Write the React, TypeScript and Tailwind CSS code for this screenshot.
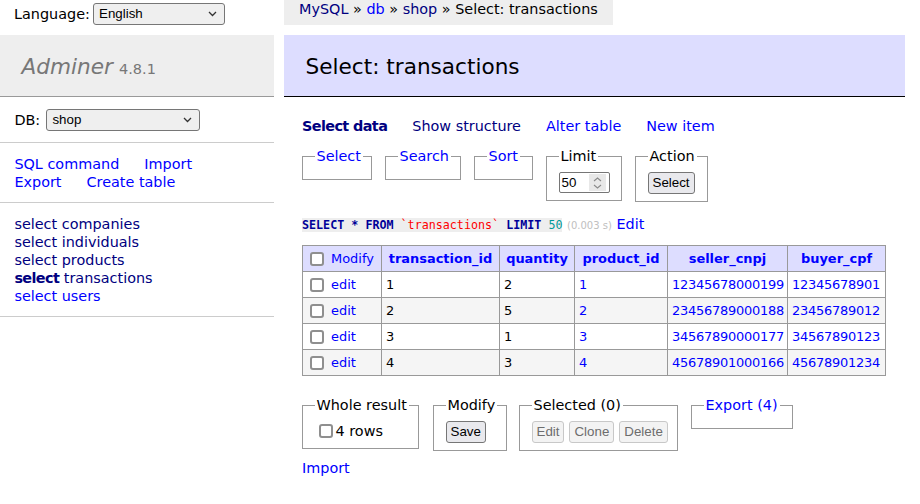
import React from 'react';

const sans = "font-['DejaVu_Sans',Verdana,sans-serif]";
const ctl = "font-['Liberation_Sans',Arial,sans-serif] text-[13.33px]";

function Chevron() {
  return (
    <svg width="9" height="6" viewBox="0 0 9 6" className="shrink-0">
      <path d="M1 1l3.5 3.5L8 1" fill="none" stroke="#333" strokeWidth="1.3" />
    </svg>
  );
}

function FakeSelect({ value, width }: { value: string; width: string }) {
  return (
    <div
      className={`flex h-[22px] ${width} items-center justify-between rounded-[3px] border border-[#767676] bg-[#efefef] pl-[5px] pr-[7px] text-black ${ctl}`}
    >
      <span>{value}</span>
      <Chevron />
    </div>
  );
}

function Checkbox({ className = '' }: { className?: string }) {
  return (
    <span
      className={`inline-block size-[14px] shrink-0 rounded-[3px] border-2 border-[#8f8f8f] bg-white align-middle ${className}`}
    />
  );
}

function Button({ label, disabled = false }: { label: string; disabled?: boolean }) {
  return (
    <span
      className={`inline-flex h-[22px] items-center rounded-[3px] border px-[4px] ${ctl} ${
        disabled
          ? 'border-[#c8c8c8] bg-[#f3f3f3] text-[#6d6d6d]'
          : 'border-[#767676] bg-[#e9e9ed] text-black'
      }`}
    >
      {label}
    </span>
  );
}

function Fieldset({
  legend,
  link = false,
  width,
  children,
}: {
  legend: string;
  link?: boolean;
  width: string;
  children?: React.ReactNode;
}) {
  return (
    <fieldset
      className={`${width} min-w-0 shrink-0 border border-[#999] pb-[7px] pl-[11.5px] pr-[10px] pt-[7px]`}
    >
      <legend className={`px-[2px] whitespace-nowrap ${link ? 'text-[blue]' : 'text-black'}`}>{legend}</legend>
      {children}
    </fieldset>
  );
}

const rows = [
  { id: '1', qty: '2', product: '1', seller: '12345678000199', buyer: '12345678901' },
  { id: '2', qty: '5', product: '2', seller: '23456789000188', buyer: '23456789012' },
  { id: '3', qty: '1', product: '3', seller: '34567890000177', buyer: '34567890123' },
  { id: '4', qty: '3', product: '4', seller: '45678901000166', buyer: '45678901234' },
];

const tables = ['companies', 'individuals', 'products', 'transactions', 'users'];

export default function App() {
  return (
    <div className={`w-[920px] bg-white text-[14.4px] leading-[18px] text-black ${sans}`}>
      {/* top bar */}
      <div className="flex h-[35px] items-start">
        <div className="flex w-[284px] items-center pl-[14px] pt-[3px]">
          <span className="w-[79px]">Language:</span>
          <FakeSelect value="English" width="w-[132px]" />
        </div>
        <div className="h-[25px] bg-[#eee] px-[15px] whitespace-nowrap">
          <span className="text-[navy]">MySQL</span> » <span className="text-[blue]">db</span> »{' '}
          <span className="text-[navy]">shop</span> » Select: transactions
        </div>
      </div>

      <div className="flex items-start">
        {/* sidebar */}
        <div className="w-[274px] shrink-0">
          <h1 className="flex h-[62px] items-center border-b border-[#999] bg-[#eee] px-[21.6px] pt-[2px] text-[#777]">
            <span className="text-[21.6px] italic">Adminer</span>
            <span className="ml-[6px] mt-[4px] text-[14.5px]">4.8.1</span>
          </h1>
          <div className="flex items-center border-b border-[#ccc] px-[14.4px] py-[11.5px]">
            <span className="w-[32px]">DB:</span>
            <FakeSelect value="shop" width="w-[154px]" />
          </div>
          <div className="border-b border-[#ccc] px-[14.4px] py-[11.5px] text-[blue]">
            <div className="flex gap-[25px]">
              <span>SQL command</span>
              <span>Import</span>
            </div>
            <div className="flex gap-[25px]">
              <span>Export</span>
              <span>Create table</span>
            </div>
          </div>
          <ul className="border-b border-[#ccc] px-[14.4px] py-[11.5px]">
            {tables.map((t) => (
              <li key={t} className={t === 'users' ? 'text-[blue]' : 'text-[navy]'}>
                {t === 'transactions' ? <b className="tracking-[-0.6px]">select</b> : 'select'} {t}
              </li>
            ))}
          </ul>
        </div>

        {/* content */}
        <div className="ml-[10px] w-[621px]">
          <h2 className="flex h-[62px] items-center border-b border-black bg-[#ddf] px-[21.6px] pt-[2px] text-[21.6px]">
            Select: transactions
          </h2>

          <div className="pl-[18px]">
            <div className="mt-[20px] flex gap-[25px]">
              <b className="tracking-[-0.6px] text-[navy]">Select data</b>
              <span className="text-[navy]">Show structure</span>
              <span className="text-[blue]">Alter table</span>
              <span className="text-[blue]">New item</span>
            </div>

            <div className="mt-[12px] flex items-start gap-[13px]">
              <Fieldset legend="Select" link width="w-[70px]" />
              <Fieldset legend="Search" link width="w-[76px]" />
              <Fieldset legend="Sort" link width="w-[59px]" />
              <Fieldset legend="Limit" width="w-[76px]">
                <div className="flex h-[21px] w-[51px] items-center justify-between rounded-[2px] border border-[#767676] bg-white pl-[2px] pr-[3px]">
                  <span className={ctl}>50</span>
                  <span className="flex h-[17px] w-[17px] flex-col items-center justify-center gap-[2px] bg-[#e8e8e8]">
                    <svg width="9" height="5" viewBox="0 0 9 5">
                      <path d="M1 4l3.5-3L8 4" fill="none" stroke="#8a8a8a" strokeWidth="1.1" />
                    </svg>
                    <svg width="9" height="5" viewBox="0 0 9 5">
                      <path d="M1 1l3.5 3L8 1" fill="none" stroke="#8a8a8a" strokeWidth="1.1" />
                    </svg>
                  </span>
                </div>
              </Fieldset>
              <Fieldset legend="Action" width="w-[73px]">
                <Button label="Select" />
              </Fieldset>
            </div>

            <p className="mt-[13px] whitespace-nowrap">
              <code className="bg-[#eee] font-['DejaVu_Sans_Mono',monospace] text-[11.7px]">
                <b className="text-[#009]">SELECT</b> <b className="text-[#009]">*</b>{' '}
                <b className="text-[#009]">FROM</b>{' '}
                <span className="text-[red]">`transactions`</span>{' '}
                <b className="text-[#009]">LIMIT</b> <span className="text-[#099]">50</span>
              </code>{' '}
              <span className="text-[10px] text-[silver]">(0.003 s)</span>{' '}
              <span className="text-[blue]">Edit</span>
            </p>

            <table className="mt-[10px] w-[583px] table-fixed border-collapse text-[12.96px] leading-[16px]">
              <colgroup>
                <col className="w-[79px]" />
                <col className="w-[118px]" />
                <col className="w-[75px]" />
                <col className="w-[93px]" />
                <col className="w-[120px]" />
                <col className="w-[98px]" />
              </colgroup>
              <thead>
                <tr className="h-[26px] bg-[#ddf]">
                  <td className="border border-[#999] px-[4px] whitespace-nowrap">
                    <Checkbox className="ml-[3px] mr-[7px]" />
                    <span className="align-middle text-[blue]">Modify</span>
                  </td>
                  {['transaction_id', 'quantity', 'product_id', 'seller_cnpj', 'buyer_cpf'].map((h) => (
                    <th key={h} className="border border-[#999] px-[6px] text-center font-bold text-[blue]">
                      {h}
                    </th>
                  ))}
                </tr>
              </thead>
              <tbody>
                {rows.map((r, i) => (
                  <tr key={r.id} className={`h-[26px] ${i % 2 ? 'bg-[#f5f5f5]' : 'bg-white'}`}>
                    <td className="border border-[#999] px-[4px] whitespace-nowrap">
                      <Checkbox className="ml-[3px] mr-[7px]" />
                      <span className="align-middle text-[blue]">edit</span>
                    </td>
                    <td className="border border-[#999] px-[4px]">{r.id}</td>
                    <td className="border border-[#999] px-[4px]">{r.qty}</td>
                    <td className="border border-[#999] px-[4px] text-[blue]">{r.product}</td>
                    <td className="border border-[#999] px-[4px] tracking-[-0.25px] text-[blue]">{r.seller}</td>
                    <td className="border border-[#999] px-[4px] tracking-[-0.25px] text-[blue]">{r.buyer}</td>
                  </tr>
                ))}
              </tbody>
            </table>

            <div className="mt-[20px] flex items-start">
              <Fieldset legend="Whole result" width="w-[117px]">
                <div className="flex h-[20px] items-center pl-[4px]">
                  <Checkbox className="mr-[3px]" />
                  <span>4 rows</span>
                </div>
              </Fieldset>
              <div className="ml-[14px]">
                <Fieldset legend="Modify" width="w-[74px]">
                  <Button label="Save" />
                </Fieldset>
              </div>
              <div className="ml-[12px]">
                <Fieldset legend="Selected (0)" width="w-[159px]">
                  <div className="flex gap-[5px]">
                    <Button label="Edit" disabled />
                    <Button label="Clone" disabled />
                    <Button label="Delete" disabled />
                  </div>
                </Fieldset>
              </div>
              <div className="ml-[13px]">
                <Fieldset legend="Export (4)" link width="w-[102px]" />
              </div>
            </div>

            <p className="mt-[8px] pb-[20px] text-[blue]">Import</p>
          </div>
        </div>
      </div>
    </div>
  );
}
